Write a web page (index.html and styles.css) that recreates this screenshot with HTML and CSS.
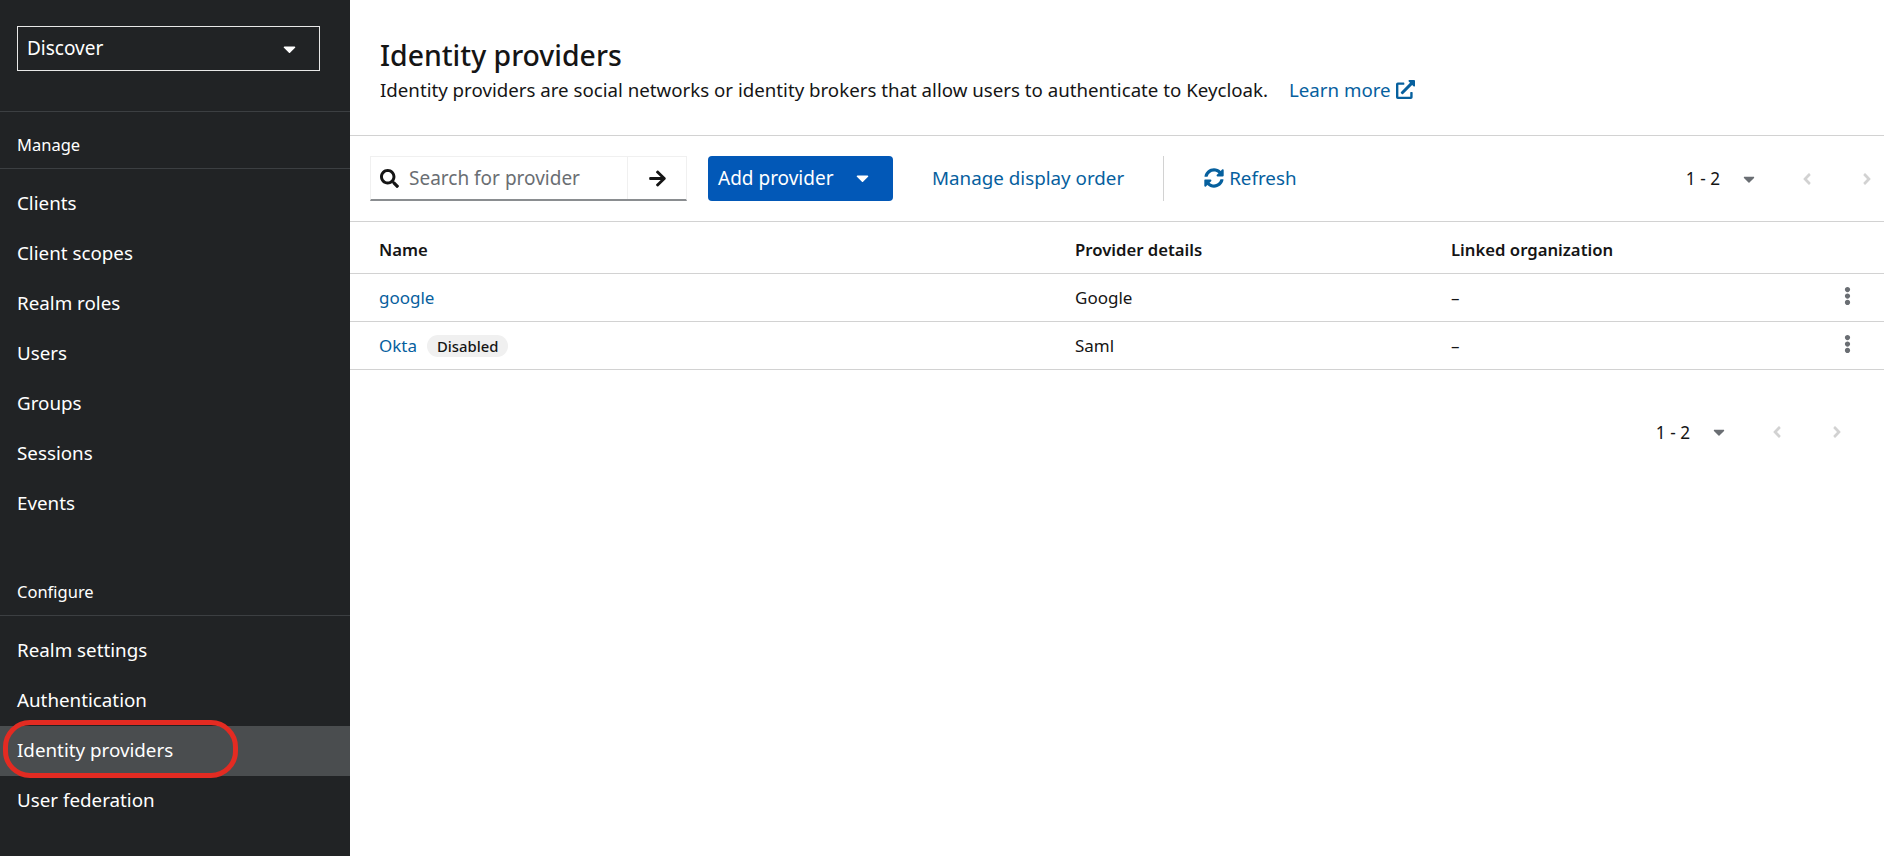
FILE: index.html
```html
<!DOCTYPE html>
<html lang="en">
<head>
<meta charset="utf-8">
<title>Identity providers</title>
<link rel="stylesheet" href="styles.css">
</head>
<body>
<svg class="sprite" aria-hidden="true">
  <symbol id="caret" viewBox="0 0 320 512"><path d="M31.3 192h257.3c17.8 0 26.7 21.5 14.1 34.1L174.1 354.8c-7.8 7.8-20.5 7.8-28.3 0L17.2 226.1C4.6 213.5 13.5 192 31.3 192z"/></symbol>
  <symbol id="left" viewBox="0 0 256 512"><path d="M31.7 239l136-136c9.4-9.4 24.6-9.4 33.9 0l22.6 22.6c9.4 9.4 9.4 24.6 0 33.9L127.9 256l96.4 96.4c9.4 9.4 9.4 24.6 0 33.9L201.7 409c-9.4 9.4-24.6 9.4-33.9 0l-136-136c-9.5-9.4-9.5-24.6-.1-34z"/></symbol>
  <symbol id="right" viewBox="0 0 256 512"><path d="M224.3 273l-136 136c-9.4 9.4-24.6 9.4-33.9 0l-22.6-22.6c-9.4-9.4-9.4-24.6 0-33.9l96.4-96.4-96.4-96.4c-9.4-9.4-9.4-24.6 0-33.9L54.3 103c9.4-9.4 24.6-9.4 33.9 0l136 136c9.5 9.4 9.5 24.6.1 34z"/></symbol>
  <symbol id="kebab" viewBox="0 0 192 512"><path d="M96 184c39.8 0 72 32.2 72 72s-32.2 72-72 72-72-32.2-72-72 32.2-72 72-72zM24 80c0 39.8 32.2 72 72 72s72-32.2 72-72S135.8 8 96 8 24 40.2 24 80zm0 352c0 39.8 32.2 72 72 72s72-32.2 72-72-32.2-72-72-72-72 32.2-72 72z"/></symbol>
</svg>
<div class="app">
  <nav class="sidebar">
    <div class="realm-wrap">
      <div class="realm">
        <span>Discover</span>
        <svg class="realm-caret"><use href="#caret"/></svg>
      </div>
    </div>
    <h2 class="nav-title">Manage</h2>
    <ul class="nav-list">
      <li class="nav-item">Clients</li>
      <li class="nav-item">Client scopes</li>
      <li class="nav-item">Realm roles</li>
      <li class="nav-item">Users</li>
      <li class="nav-item">Groups</li>
      <li class="nav-item">Sessions</li>
      <li class="nav-item">Events</li>
    </ul>
    <h2 class="nav-title nav-title-plain">Configure</h2>
    <ul class="nav-list">
      <li class="nav-item">Realm settings</li>
      <li class="nav-item">Authentication</li>
      <li class="nav-item nav-item-active">Identity providers<span class="ring"></span></li>
      <li class="nav-item">User federation</li>
    </ul>
  </nav>
  <main class="main">
    <header class="page-head">
      <h1 class="page-title">Identity providers</h1>
      <p class="page-desc">Identity providers are social networks or identity brokers that allow users to authenticate to Keycloak.<a class="learn" href="#">Learn more<svg class="ext" viewBox="0 0 512 512"><path d="M432,320H400a16,16,0,0,0-16,16V448H64V128H208a16,16,0,0,0,16-16V80a16,16,0,0,0-16-16H48A48,48,0,0,0,0,112V464a48,48,0,0,0,48,48H400a48,48,0,0,0,48-48V336A16,16,0,0,0,432,320ZM488,0h-128c-21.37,0-32.05,25.91-17,41l35.73,35.73L135,320.37a24,24,0,0,0,0,34L157.67,377a24,24,0,0,0,34,0L435.28,133.32,471,169c15,15,41,4.5,41-17V24A24,24,0,0,0,488,0Z"/></svg></a></p>
    </header>
    <div class="toolbar">
      <div class="search">
        <div class="search-field">
          <svg class="search-icon" viewBox="0 0 512 512"><path d="M505 442.7L405.3 343c-4.5-4.5-10.6-7-17-7H372c27.6-35.3 44-79.7 44-128C416 93.1 322.9 0 208 0S0 93.1 0 208s93.1 208 208 208c48.3 0 92.7-16.4 128-44v16.3c0 6.4 2.5 12.5 7 17l99.7 99.7c9.4 9.4 24.6 9.4 33.9 0l28.3-28.3c9.4-9.4 9.4-24.6.1-34zM208 336c-70.7 0-128-57.2-128-128 0-70.7 57.2-128 128-128 70.7 0 128 57.2 128 128 0 70.7-57.2 128-128 128z"/></svg>
          <span class="placeholder">Search for provider</span>
        </div>
        <div class="search-go">
          <svg class="arrow" viewBox="0 0 448 512"><path d="M190.5 66.9l22.2-22.2c9.4-9.4 24.6-9.4 33.9 0L441 239c9.4 9.4 9.4 24.6 0 33.9L246.6 467.3c-9.4 9.4-24.6 9.4-33.9 0l-22.2-22.2c-9.5-9.5-9.3-25 .4-34.3L311.4 296H24c-13.3 0-24-10.7-24-24v-32c0-13.3 10.7-24 24-24h287.4L190.9 101.2c-9.8-9.3-10-24.8-.4-34.3z"/></svg>
        </div>
      </div>
      <div class="btn-primary"><span>Add provider</span><svg class="btn-caret"><use href="#caret"/></svg></div>
      <a class="tool-link" href="#">Manage display order</a>
      <div class="tool-sep"></div>
      <a class="tool-link refresh" href="#"><svg class="sync" viewBox="0 0 512 512"><path d="M370.72 133.28C339.458 104.008 298.888 87.962 255.848 88c-77.458.068-144.328 53.178-162.791 126.85-1.344 5.363-6.122 9.15-11.651 9.15H24.103c-7.498 0-13.194-6.807-11.807-14.176C33.933 94.924 134.813 8 256 8c66.448 0 126.791 26.136 171.315 68.685L463.03 40.97C478.149 25.851 504 36.559 504 57.941V192c0 13.255-10.745 24-24 24H345.941c-21.382 0-32.09-25.851-16.971-40.971l41.75-41.749zM32 296h134.059c21.382 0 32.09 25.851 16.971 40.971l-41.75 41.75c31.262 29.273 71.835 45.319 114.876 45.28 77.418-.07 144.315-53.144 162.787-126.849 1.344-5.363 6.122-9.15 11.651-9.15h57.304c7.498 0 13.194 6.807 11.807 14.176C478.067 417.076 377.187 504 256 504c-66.448 0-126.791-26.136-171.315-68.685L48.97 471.03C33.851 486.149 8 475.441 8 454.059V320c0-13.255 10.745-24 24-24z"/></svg>Refresh</a>
      <div class="pager pager-top">
        <span class="pager-count">1 - 2</span>
        <svg class="pager-caret"><use href="#caret"/></svg>
        <svg class="pager-arrow pager-prev"><use href="#left"/></svg>
        <svg class="pager-arrow pager-next"><use href="#right"/></svg>
      </div>
    </div>
    <div class="table">
      <div class="row row-head">
        <div>Name</div>
        <div>Provider details</div>
        <div>Linked organization</div>
        <div></div>
      </div>
      <div class="row">
        <div><a class="name-link" href="#">google</a></div>
        <div>Google</div>
        <div>–</div>
        <div class="kebab-cell"><svg class="kebab"><use href="#kebab"/></svg></div>
      </div>
      <div class="row">
        <div class="name-cell"><a class="name-link" href="#">Okta</a><span class="label">Disabled</span></div>
        <div>Saml</div>
        <div>–</div>
        <div class="kebab-cell"><svg class="kebab"><use href="#kebab"/></svg></div>
      </div>
    </div>
    <div class="pager pager-bottom">
      <span class="pager-count">1 - 2</span>
      <svg class="pager-caret"><use href="#caret"/></svg>
      <svg class="pager-arrow pager-prev"><use href="#left"/></svg>
      <svg class="pager-arrow pager-next"><use href="#right"/></svg>
    </div>
  </main>
</div>
</body>
</html>
```
FILE: styles.css
```css
* { box-sizing: border-box; }
html, body { margin: 0; padding: 0; height: 100%; overflow: hidden; }
body { font-family: "Noto Sans", "Liberation Sans", sans-serif; font-size: 19px; color: #151515; background: #fff; }
.sprite { display: none; }
.app { display: flex; height: 856px; }

.sidebar { width: 350px; flex: none; background: #212325; color: #fff; overflow: hidden; }
.realm-wrap { padding: 26px 30px 40px 17px; border-bottom: 1px solid #3c3f42; height: 112px; }
.realm { height: 45px; border: 1px solid #e8e8e8; display: flex; align-items: center; justify-content: space-between; padding: 0 23px 0 9px; font-size: 19px; line-height: 1; }
.realm-caret { width: 13px; height: 20px; fill: #fff; }
.nav-title { margin: 0; height: 57px; padding: 8px 17px 0; display: flex; align-items: center; font-size: 16.5px; font-weight: 400; border-bottom: 1px solid #3c3f42; }
.nav-title-plain { height: 56px; margin-top: 31px; padding-top: 8px; }
.nav-list { list-style: none; margin: 10px 0 0; padding: 0; }
.nav-item { height: 50px; padding: 0 17px 2px; display: flex; align-items: center; font-size: 18.8px; position: relative; }
.nav-item-active { background: #4a4d4f; }
.ring { position: absolute; left: 3px; top: -6px; width: 235px; height: 58px; border: 5px solid #e32b22; border-radius: 27px; }

.main { flex: 1; min-width: 0; }
.page-head { height: 136px; border-bottom: 1px solid #d2d2d2; padding: 36px 29px 0 30px; }
.page-title { margin: 0; font-size: 28.4px; line-height: 38px; font-weight: 500; }
.page-desc { margin: 0; font-size: 18.7px; line-height: 32px; }
.learn { color: #06609e; text-decoration: none; margin-left: 21px; }
.ext { width: 19px; height: 19px; fill: #06609e; margin-left: 5px; vertical-align: -2px; }

.toolbar { height: 86px; border-bottom: 1px solid #d2d2d2; display: flex; align-items: center; padding-left: 20px; }
.search { display: flex; width: 317px; height: 45px; border: 1px solid #f0f0f0; border-bottom: 2px solid #8a8d90; }
.search-field { flex: 1; display: flex; align-items: center; padding-left: 9px; border-right: 1px solid #f0f0f0; }
.search-icon { width: 19px; height: 19px; fill: #151515; }
.placeholder { margin-left: 10px; color: #6a6e73; font-size: 19px; }
.search-go { width: 58px; display: flex; align-items: center; justify-content: center; }
.arrow { width: 17px; height: 19px; fill: #151515; }
.btn-primary { margin-left: 21px; width: 185px; height: 45px; background: #0258b7; color: #fff; border-radius: 4px; display: flex; align-items: center; padding: 0 0 2px 10px; font-size: 19px; }
.btn-caret { width: 13px; height: 20px; fill: #fff; margin-left: 22px; }
.tool-link { color: #06609e; text-decoration: none; font-size: 18.8px; margin: -2px 0 0 39px; }
.tool-sep { width: 1px; height: 45px; background: #d2d2d2; margin-left: 39px; }
.refresh { display: flex; align-items: center; margin-left: 40px; }
.sync { width: 20px; height: 20px; fill: #06609e; margin-right: 5px; }

.pager { display: flex; align-items: center; margin-left: auto; }
.pager-count { font-size: 17.2px; }
.pager-caret { width: 12px; height: 18px; fill: #6a6e73; margin-left: 23px; }
.pager-arrow { width: 10px; height: 18px; fill: #d2d2d2; }
.pager-prev { margin-left: 47px; }
.pager-next { margin-left: 50px; }
.pager-top { margin-right: 12px; }
.pager-bottom { justify-content: flex-end; margin-top: 52px; padding-right: 42px; height: 20px; }

.row { display: grid; grid-template-columns: 696px 376px 1fr 60px; align-items: center; height: 48px; padding-left: 29px; border-bottom: 1px solid #d2d2d2; font-size: 17px; }
.row-head { height: 52px; font-weight: 600; font-size: 16.7px; padding-top: 3px; }
.name-link { color: #06609e; text-decoration: none; }
.name-cell { display: flex; align-items: center; }
.label { margin-left: 10px; height: 22px; padding: 0 10px; border-radius: 11px; background: #f0f0f0; font-size: 14.8px; font-weight: 500; display: flex; align-items: center; }
.kebab-cell { display: flex; }
.kebab { width: 7px; height: 20px; fill: #6a6e73; margin: -3px 0 0 20px; }
```
